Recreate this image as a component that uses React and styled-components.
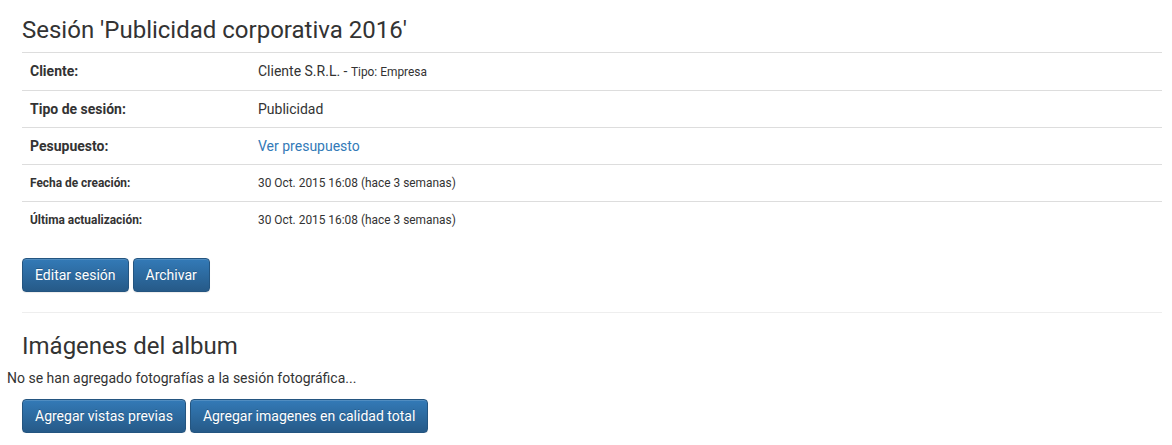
import styled, { createGlobalStyle } from 'styled-components';

const GlobalStyle = createGlobalStyle`
	body {
		margin: 0;
		font-family: Roboto, "Liberation Sans", sans-serif;
		font-size: 14px;
		line-height: 1.42857;
		color: #333;
		background: #fff;
	}
`;

const Page = styled.div`
	padding: 0 10px 0 7px;
`;

const Section = styled.div`
	padding-left: 15px;
`;

const Title = styled.h3`
	font-size: 24px;
	font-weight: 400;
	line-height: 1.1;
	margin: ${({ $top }) => $top} 0 9px;
`;

const Table = styled.table`
	width: 100%;
	border-collapse: collapse;
	margin-bottom: 20px;

	& td {
		padding: 8px;
		line-height: 20px;
		border-top: 1px solid #ddd;
		vertical-align: top;
	}
`;

const Label = styled.td`
	width: 20%;
	font-weight: 700;
	font-size: ${({ $small }) => ($small ? '11.9px' : '14px')};
`;

const Value = styled.td`
	font-size: ${({ $small }) => ($small ? '11.9px' : '14px')};
`;

const Small = styled.small`
	font-size: 11.9px;
`;

const Link = styled.a`
	color: #337ab7;
	text-decoration: none;
`;

const Actions = styled.div`
	display: flex;
	gap: 4px;
	padding-left: ${({ $indent }) => ($indent ? '15px' : '0')};
`;

const Button = styled.button`
	font-family: inherit;
	font-size: 14px;
	line-height: 20px;
	padding: 6px 12px;
	color: #fff;
	border: 1px solid #245580;
	border-radius: 4px;
	background-image: linear-gradient(to bottom, #337ab7 0, #265a88 100%);
	text-shadow: 0 -1px 0 rgba(0, 0, 0, 0.2);
	box-shadow: inset 0 1px 0 rgba(255, 255, 255, 0.15), 0 1px 1px rgba(0, 0, 0, 0.075);
	cursor: pointer;
`;

const Divider = styled.hr`
	margin: 20px 0;
	border: 0;
	border-top: 1px solid #eee;
`;

const Empty = styled.p`
	margin: 0 0 10px;
`;

export default function App() {
	return (
		<Page>
			<GlobalStyle />
			<Section>
				<Title $top="17px">Sesión 'Publicidad corporativa 2016'</Title>
				<Table>
					<tbody>
						<tr>
							<Label>Cliente:</Label>
							<Value>
								Cliente S.R.L. - <Small>Tipo: Empresa</Small>
							</Value>
						</tr>
						<tr>
							<Label>Tipo de sesión:</Label>
							<Value>Publicidad</Value>
						</tr>
						<tr>
							<Label>Pesupuesto:</Label>
							<Value>
								<Link href="#">Ver presupuesto</Link>
							</Value>
						</tr>
						<tr>
							<Label $small>Fecha de creación:</Label>
							<Value $small>30 Oct. 2015 16:08 (hace 3 semanas)</Value>
						</tr>
						<tr>
							<Label $small>Última actualización:</Label>
							<Value $small>30 Oct. 2015 16:08 (hace 3 semanas)</Value>
						</tr>
					</tbody>
				</Table>
				<Actions>
					<Button>Editar sesión</Button>
					<Button>Archivar</Button>
				</Actions>
				<Divider />
				<Title $top="20px">Imágenes del album</Title>
			</Section>
			<Empty>No se han agregado fotografías a la sesión fotográfica...</Empty>
			<Actions $indent>
				<Button>Agregar vistas previas</Button>
				<Button>Agregar imagenes en calidad total</Button>
			</Actions>
		</Page>
	);
}
